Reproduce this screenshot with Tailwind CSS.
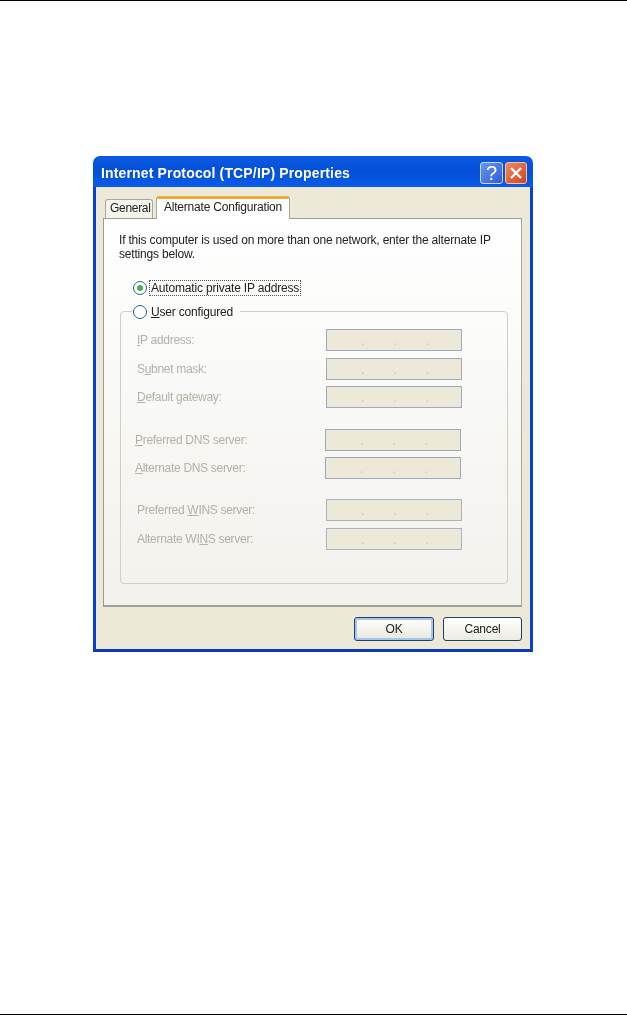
<!DOCTYPE html>
<html lang="en">
<head>
  <meta charset="UTF-8">
  <title>Internet Protocol (TCP/IP) Properties</title>
  <script src="https://cdn.jsdelivr.net/npm/@tailwindcss/browser@4"></script>
</head>
<body class="bg-white font-['Liberation_Sans',Arial,sans-serif]">
  <div class="w-[627px] h-[1015px] flex flex-col justify-between overflow-hidden">
    <div class="h-px bg-black"></div>

    <main class="flex-1 pt-[155px] pl-[93px]">
      <div class="w-[440px] h-[496px] flex flex-col blur-[0.35px]">
        <!-- title bar -->
        <div class="h-[31px] shrink-0 rounded-t-[7px] bg-gradient-to-b from-[#0a5ae0] via-[#0450d8] to-[#0a5cea] pl-2 pr-[6px] flex items-center justify-between">
          <span class="text-white font-bold text-[14px] tracking-[0.15px] whitespace-nowrap pt-[3px]">Internet Protocol (TCP/IP) Properties</span>
          <div class="flex gap-[2px] mt-[2px]">
            <div class="w-[23px] h-[22px] rounded-[3px] border border-[#c9d8f5] bg-gradient-to-br from-[#6a96f2] to-[#2f5cd6] text-white text-[20px] leading-[20px] text-center">?</div>
            <div class="w-[22px] h-[22px] rounded-[3px] border border-[#eec4b0] bg-gradient-to-br from-[#ec8a60] to-[#d2401c] flex items-center justify-center">
              <svg width="14" height="14" viewBox="0 0 14 14" fill="none" stroke="white" stroke-width="2.4"><path d="M2 2 L12 12 M12 2 L2 12"/></svg>
            </div>
          </div>
        </div>

        <!-- window body -->
        <div class="flex-1 bg-[#ece9d8] border-x-[3px] border-b-[3px] border-x-[#0a3fd0] border-b-[#0a3ab8] pt-2 px-[7px] flex flex-col">
          <!-- tabs -->
          <div class="h-[23px] flex items-end text-[12px] tracking-[-0.2px] text-[#222]">
            <div class="ml-[2px] w-[48px] h-[19px] border border-b-0 border-[#a8a898] rounded-t-[3px] bg-[#f4f3ec] pl-[4px] leading-[17px] tracking-[-0.3px] whitespace-nowrap">General</div>
            <div class="ml-[3px] w-[134px] h-[23px] border-x border-[#a8a898] rounded-t-[3px] border-t-[3px] border-t-[#f0a838] bg-white text-center leading-[17px] relative top-px">Alternate Configuration</div>
          </div>

          <!-- tab panel -->
          <div class="w-[419px] h-[389px] border border-[#9a9a8e] border-r-[#a8a89c] border-b-2 border-b-[#a09e92] bg-gradient-to-b from-white to-[#f2f1ec] pt-[14px] pl-[15px] pr-[12px] text-[12px] tracking-[-0.18px] text-[#222]">
            <p class="leading-[14px] w-[385px]">If this computer is used on more than one network, enter the alternate IP settings below.</p>

            <div class="mt-[18px] ml-[14px] flex items-center h-[17px]">
              <span class="w-[14px] h-[14px] shrink-0 rounded-full border border-[#2c5f85] bg-white flex items-center justify-center">
                <span class="w-[6px] h-[6px] rounded-full bg-[#46b04a]"></span>
              </span>
              <span class="ml-[2px] px-px h-[16px] leading-[14px] border border-dotted border-[#555] whitespace-nowrap">Automatic private IP address</span>
            </div>

            <fieldset class="mt-[7px] ml-px w-[388px] h-[281px] border border-[#d0d0bf] rounded-[4px] px-[16px]">
              <legend class="-ml-[4px] pr-[7px] flex items-center h-[17px]">
                <span class="w-[14px] h-[14px] shrink-0 rounded-full border border-[#2c5f85] bg-white"></span>
                <span class="ml-[4px]"><u>U</u>ser configured</span>
              </legend>

              <div class="text-[#b2b2a8] tracking-[-0.3px]">
                <div class="mt-[9px] h-[22px] flex items-center justify-between pr-[29px]">
                  <label><u>I</u>P address:</label>
                  <div class="w-[136px] h-[22px] border border-[#9fa9bc] bg-[#ece9d8] grid grid-cols-4 text-right text-[#c8c4b6] leading-[22px] pl-[5px]"><span>.</span><span>.</span><span>.</span></div>
                </div>
                <div class="mt-[7px] h-[22px] flex items-center justify-between pr-[29px]">
                  <label>S<u>u</u>bnet mask:</label>
                  <div class="w-[136px] h-[22px] border border-[#9fa9bc] bg-[#ece9d8] grid grid-cols-4 text-right text-[#c8c4b6] leading-[22px] pl-[5px]"><span>.</span><span>.</span><span>.</span></div>
                </div>
                <div class="mt-[6px] h-[22px] flex items-center justify-between pr-[29px]">
                  <label><u>D</u>efault gateway:</label>
                  <div class="w-[136px] h-[22px] border border-[#9fa9bc] bg-[#ece9d8] grid grid-cols-4 text-right text-[#c8c4b6] leading-[22px] pl-[5px]"><span>.</span><span>.</span><span>.</span></div>
                </div>

                <div class="mt-[21px] -ml-[2px] h-[22px] flex items-center justify-between pr-[30px]">
                  <label><u>P</u>referred DNS server:</label>
                  <div class="w-[136px] h-[22px] border border-[#9fa9bc] bg-[#ece9d8] grid grid-cols-4 text-right text-[#c8c4b6] leading-[22px] pl-[5px]"><span>.</span><span>.</span><span>.</span></div>
                </div>
                <div class="mt-[6px] -ml-[2px] h-[22px] flex items-center justify-between pr-[30px]">
                  <label><u>A</u>lternate DNS server:</label>
                  <div class="w-[136px] h-[22px] border border-[#9fa9bc] bg-[#ece9d8] grid grid-cols-4 text-right text-[#c8c4b6] leading-[22px] pl-[5px]"><span>.</span><span>.</span><span>.</span></div>
                </div>

                <div class="mt-[20px] h-[22px] flex items-center justify-between pr-[29px]">
                  <label>Preferred <u>W</u>INS server:</label>
                  <div class="w-[136px] h-[22px] border border-[#a9b4c2] bg-[#ece9d8] grid grid-cols-4 text-right text-[#c8c4b6] leading-[22px] pl-[5px]"><span>.</span><span>.</span><span>.</span></div>
                </div>
                <div class="mt-[7px] h-[22px] flex items-center justify-between pr-[29px]">
                  <label>Alternate WI<u>N</u>S server:</label>
                  <div class="w-[136px] h-[22px] border border-[#a9b4c2] bg-[#ece9d8] grid grid-cols-4 text-right text-[#c8c4b6] leading-[22px] pl-[5px]"><span>.</span><span>.</span><span>.</span></div>
                </div>
              </div>
            </fieldset>
          </div>

          <!-- buttons -->
          <div class="mt-[10px] flex justify-end gap-[9px] pr-[1px] text-[12px] tracking-[-0.2px] text-[#222]">
            <button class="w-[80px] h-[24px] rounded-[3px] border border-[#1f3f6e] bg-gradient-to-b from-white to-[#e8e8de] shadow-[inset_0_0_0_2px_#a8c4ea]">OK</button>
            <button class="w-[79px] h-[24px] rounded-[3px] border border-[#1f3f5e] bg-gradient-to-b from-white to-[#ecebe2]">Cancel</button>
          </div>
        </div>
      </div>
    </main>

    <div class="h-px bg-black"></div>
  </div>
</body>
</html>
